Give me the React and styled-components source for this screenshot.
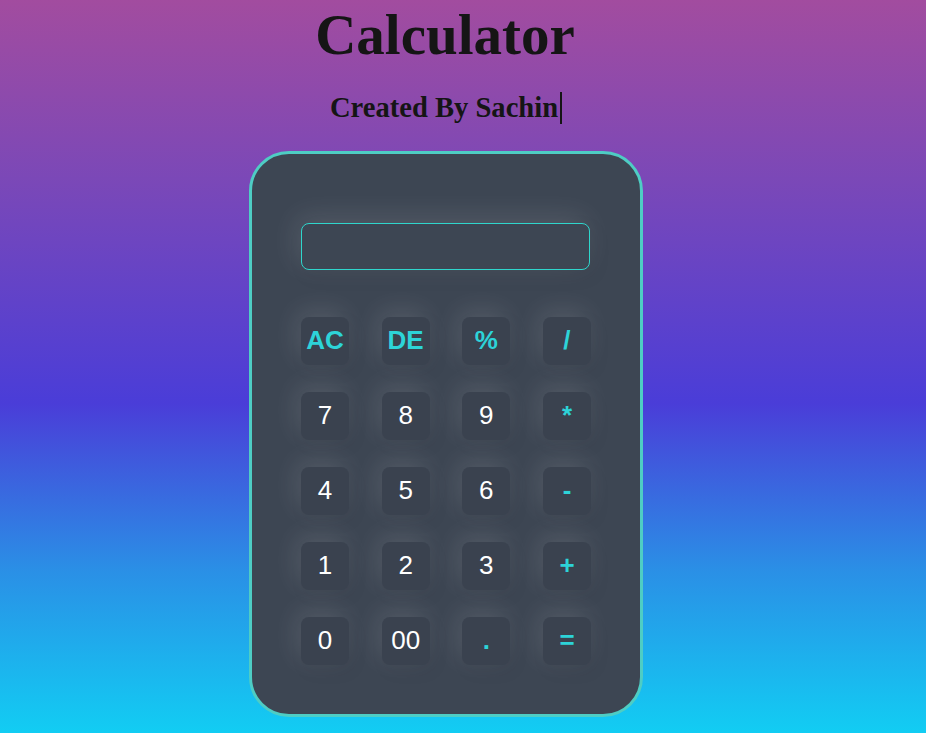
import React from 'react';
import styled, { createGlobalStyle } from 'styled-components';

const GlobalStyle = createGlobalStyle`
  html, body {
    margin: 0;
    padding: 0;
    height: 100%;
  }

  body {
    min-height: 100vh;
    background: linear-gradient(to bottom, #a24c9f 0%, #7a48b8 25%, #4a3dd8 55%, #2a90e6 78%, #12cdf3 100%);
    font-family: "Liberation Serif", "Times New Roman", serif;
  }
`;

const KEYS = [
  { label: 'AC', op: true },
  { label: 'DE', op: true },
  { label: '%', op: true },
  { label: '/', op: true },
  { label: '7' },
  { label: '8' },
  { label: '9' },
  { label: '*', op: true },
  { label: '4' },
  { label: '5' },
  { label: '6' },
  { label: '-', op: true },
  { label: '1' },
  { label: '2' },
  { label: '3' },
  { label: '+', op: true },
  { label: '0' },
  { label: '00' },
  { label: '.', op: true },
  { label: '=', op: true },
];

const App = () => {
  return (
    <>
      <GlobalStyle />
      <Page>
        <Title>Calculator</Title>
        <Subtitle>
          <Typed>Created By Sachin</Typed>
        </Subtitle>

        <Card>
          <Display type="text" readOnly value="" />
          <Keypad>
            {KEYS.map((k) => (
              <Key key={k.label} $op={k.op}>
                {k.label}
              </Key>
            ))}
          </Keypad>
        </Card>
      </Page>
    </>
  );
};

// スタイル
const Page = styled.div`
  display: flex;
  flex-direction: column;
  align-items: center;
  padding: 2px 34px 0 0;
`;

const Title = styled.h1`
  margin: 0 2px 0 0;
  font-size: 57px;
  font-weight: 700;
  color: #151515;
`;

const Subtitle = styled.h2`
  margin: 25px 0 0;
  font-size: 28.6px;
  font-weight: 700;
  color: #151515;
  line-height: 32px;
`;

const Typed = styled.span`
  display: inline-block;
  padding-right: 2px;
  border-right: 2px solid #151515;
`;

const Card = styled.div`
  margin-top: 27px;
  width: 290px;
  padding: 69px 49px 49px 49px;
  background-color: #3d4653;
  border: 3px solid #4ecdc4;
  border-radius: 40px;
  display: flex;
  flex-direction: column;
  gap: 47px;
`;

const Display = styled.input`
  box-sizing: border-box;
  width: 289px;
  height: 47px;
  background-color: #3d4653;
  border: 1px solid #2fd6cc;
  border-radius: 8px;
  outline: none;
  color: #ffffff;
  font-family: "Liberation Sans", Arial, sans-serif;
  font-size: 24px;
  box-shadow: -4px -6px 28px rgba(255, 255, 255, 0.12), 4px 6px 20px rgba(0, 0, 0, 0.06);
`;

const Keypad = styled.div`
  display: grid;
  grid-template-columns: repeat(4, 48px);
  grid-auto-rows: 48px;
  justify-content: space-between;
  row-gap: 27px;
`;

const Key = styled.button`
  width: 48px;
  height: 48px;
  padding: 0 0 2px;
  border: none;
  border-radius: 8px;
  background-color: #3a424f;
  color: ${(p) => (p.$op ? '#2dd3d8' : '#ffffff')};
  font-family: "Liberation Sans", Arial, sans-serif;
  font-size: 26px;
  font-weight: ${(p) => (p.$op ? 700 : 400)};
  display: flex;
  align-items: center;
  justify-content: center;
  cursor: pointer;
  box-shadow: -4px -6px 26px rgba(255, 255, 255, 0.12), 4px 6px 18px rgba(0, 0, 0, 0.06);
`;

export default App;
